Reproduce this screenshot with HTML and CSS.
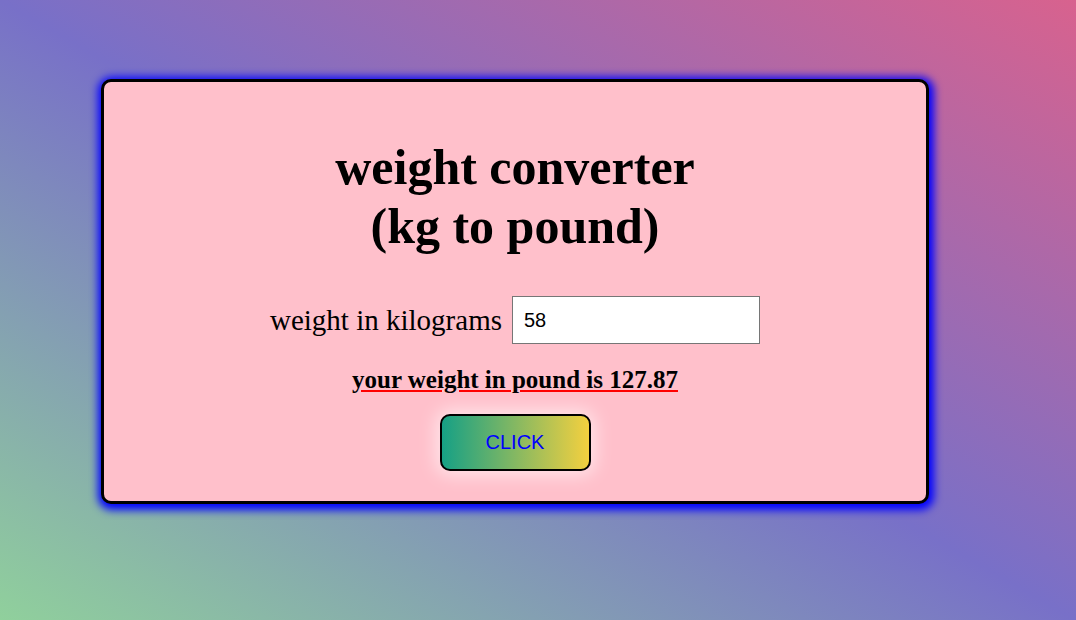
FILE: index.html
```html
<!DOCTYPE html>
<html>
<head>
<meta charset="utf-8">
<link rel="stylesheet" href="styles.css">
</head>
<body>
<div class="card">
  <h1 class="title">weight converter<br>(kg to pound)</h1>
  <div class="row">
    <label class="label" for="kg">weight in kilograms</label>
    <input class="input" id="kg" type="text" value="58">
  </div>
  <p class="result">your weight in pound is 127.87</p>
  <button class="btn">CLICK</button>
</div>
</body>
</html>
```
FILE: styles.css
```css
html, body {
  margin: 0;
  height: 100%;
}
body {
  background: linear-gradient(to top right, #90d09c 0%, #7870c8 50%, #d8628e 100%);
  font-family: "Liberation Serif", "Times New Roman", serif;
  overflow: hidden;
}
.card {
  box-sizing: border-box;
  margin: 79px 0 0 101px;
  width: 828px;
  height: 425px;
  background: #ffc0cb;
  border: 3px solid #000;
  border-radius: 10px;
  box-shadow: 1px 2px 8px 4px #0000ff;
  display: flex;
  flex-direction: column;
  align-items: center;
}
.title {
  margin: 56px 0 0;
  font-size: 50px;
  line-height: 59px;
  font-weight: bold;
  text-align: center;
}
.row {
  margin-top: 40px;
  display: flex;
  align-items: center;
  gap: 10px;
}
.label {
  font-size: 29px;
}
.input {
  box-sizing: border-box;
  width: 248px;
  height: 48px;
  border: 1px solid #767676;
  padding: 0 11px;
  font-family: "Liberation Sans", Arial, sans-serif;
  font-size: 20px;
  color: #000;
  background: #fff;
}
.result {
  margin: 22px 0 0;
  font-size: 25px;
  font-weight: bold;
  text-decoration: underline;
  text-decoration-color: #ff0000;
}
.btn {
  box-sizing: border-box;
  margin-top: 20px;
  width: 151px;
  height: 57px;
  border: 2px solid #000;
  border-radius: 10px;
  background: linear-gradient(to right, #16a085, #f4d03f);
  color: #0000ff;
  font-family: "Liberation Sans", Arial, sans-serif;
  font-size: 20px;
  box-shadow: 0 0 18px 4px rgba(255,255,255,0.6);
}
```
